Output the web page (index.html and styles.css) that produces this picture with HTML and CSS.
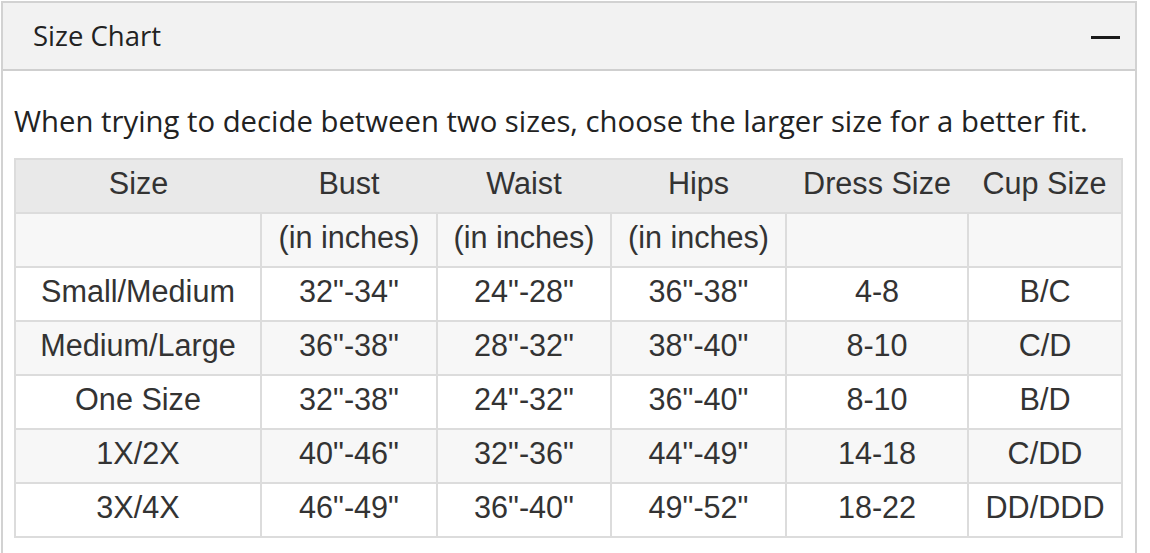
FILE: index.html
```html
<!DOCTYPE html>
<html>
<head>
<meta charset="utf-8">
<link rel="stylesheet" href="styles.css">
</head>
<body>
<div class="panel">
  <div class="panel-head">
    <span class="panel-title">Size Chart</span>
    <span class="collapse-icon"></span>
  </div>
  <div class="panel-body">
    <p class="note">When trying to decide between two sizes, choose the larger size for a better fit.</p>
    <table class="chart">
      <colgroup>
        <col class="c1"><col class="c2"><col class="c3"><col class="c4"><col class="c5"><col class="c6">
      </colgroup>
      <tr class="head"><td>Size</td><td>Bust</td><td>Waist</td><td>Hips</td><td>Dress Size</td><td>Cup Size</td></tr>
      <tr class="alt"><td></td><td>(in inches)</td><td>(in inches)</td><td>(in inches)</td><td></td><td></td></tr>
      <tr><td>Small/Medium</td><td>32"-34"</td><td>24"-28"</td><td>36"-38"</td><td>4-8</td><td>B/C</td></tr>
      <tr class="alt"><td>Medium/Large</td><td>36"-38"</td><td>28"-32"</td><td>38"-40"</td><td>8-10</td><td>C/D</td></tr>
      <tr><td>One Size</td><td>32"-38"</td><td>24"-32"</td><td>36"-40"</td><td>8-10</td><td>B/D</td></tr>
      <tr class="alt"><td>1X/2X</td><td>40"-46"</td><td>32"-36"</td><td>44"-49"</td><td>14-18</td><td>C/DD</td></tr>
      <tr><td>3X/4X</td><td>46"-49"</td><td>36"-40"</td><td>49"-52"</td><td>18-22</td><td>DD/DDD</td></tr>
    </table>
  </div>
</div>
</body>
</html>
```

FILE: styles.css
```css
html, body {
  margin: 0;
  padding: 0;
  background: #ffffff;
}
.panel {
  margin: 1px 0 0 1px;
  width: 1136px;
  height: 600px;
  border: 2px solid #d2d2d2;
  border-bottom: none;
  box-sizing: border-box;
}
.panel-head {
  height: 68px;
  box-sizing: border-box;
  background: #f2f2f2;
  border-bottom: 2px solid #cfcfcf;
  display: flex;
  align-items: center;
  justify-content: space-between;
  padding: 0 15px 0 30px;
}
.panel-title {
  font-family: "Open Sans", sans-serif;
  font-size: 27.5px;
  color: #222;
  margin-top: -2px;
}
.collapse-icon {
  width: 29px;
  height: 3px;
  background: #1a1a1a;
  margin-top: 2px;
}
.panel-body {
  padding: 0 0 0 11px;
}
.note {
  margin: 0;
  padding-top: 30px;
  height: 87px;
  box-sizing: border-box;
  font-family: "Open Sans", sans-serif;
  font-size: 29.3px;
  line-height: 40px;
  color: #222;
  white-space: nowrap;
}
.chart {
  border-collapse: collapse;
  width: 1107px;
  table-layout: fixed;
  font-family: "Liberation Sans", Arial, sans-serif;
  font-size: 30.6px;
  color: #333;
  border: 2px solid #dcdcdc;
}
.c1 { width: 246px; }
.c2 { width: 176px; }
.c3 { width: 174px; }
.c4 { width: 175px; }
.c5 { width: 182px; }
.c6 { width: 154px; }
.chart td {
  height: 54px;
  box-sizing: border-box;
  padding: 0 0 6px 0;
  line-height: 46px;
  text-align: center;
  vertical-align: middle;
  border: 2px solid #dcdcdc;
  white-space: nowrap;
}
.chart tr.head td {
  background: #e9e9e9;
  border-left: none;
  border-right: none;
}
.chart tr.alt td {
  background: #f7f7f7;
}
```
